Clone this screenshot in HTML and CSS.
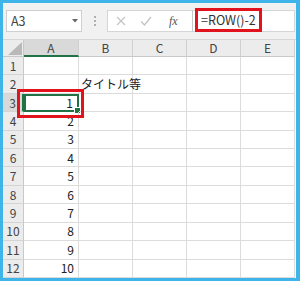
FILE: index.html
```html
<!DOCTYPE html>
<html lang="ja">
<head>
<meta charset="utf-8">
<link rel="stylesheet" href="styles.css">
</head>
<body>
<div class="frame">
  <div class="fbar">
    <div class="namebox"><span>A3</span><svg class="caret" width="6" height="4" viewBox="0 0 6 4"><path d="M0 0H6L3 3.5Z" fill="#666"/></svg></div>
    <div class="sep"><i></i><i></i><i></i></div>
    <div class="btns">
      <svg width="10" height="10" viewBox="0 0 10 10"><path d="M1 1L9 9M9 1L1 9" stroke="#c4c4c4" stroke-width="1.2" fill="none"/></svg>
      <svg width="12" height="10" viewBox="0 0 12 10"><path d="M1 5.5L4.5 9L11 1" stroke="#c4c4c4" stroke-width="1.3" fill="none"/></svg>
      <span class="fx">fx</span>
    </div>
    <div class="formula"><span class="hl">=ROW()-2</span></div>
  </div>
  <div class="sheet">
    <div class="corner"><svg width="14" height="13" viewBox="0 0 14 13"><path d="M14 0V13H0Z" fill="#b9b9b9"/></svg></div>
    <div class="ch sel">A</div><div class="ch">B</div><div class="ch">C</div><div class="ch">D</div><div class="ch last">E</div>

    <div class="rh">1</div><div class="c"></div><div class="c"></div><div class="c"></div><div class="c"></div><div class="c last"></div>
    <div class="rh">2</div><div class="c"></div><div class="c over">タイトル等</div><div class="c"></div><div class="c"></div><div class="c last"></div>
    <div class="rh rsel">3</div><div class="c num active">1<i class="handle"></i></div><div class="c"></div><div class="c"></div><div class="c"></div><div class="c last"></div>
    <div class="rh">4</div><div class="c num">2</div><div class="c"></div><div class="c"></div><div class="c"></div><div class="c last"></div>
    <div class="rh">5</div><div class="c num">3</div><div class="c"></div><div class="c"></div><div class="c"></div><div class="c last"></div>
    <div class="rh">6</div><div class="c num">4</div><div class="c"></div><div class="c"></div><div class="c"></div><div class="c last"></div>
    <div class="rh">7</div><div class="c num">5</div><div class="c"></div><div class="c"></div><div class="c"></div><div class="c last"></div>
    <div class="rh">8</div><div class="c num">6</div><div class="c"></div><div class="c"></div><div class="c"></div><div class="c last"></div>
    <div class="rh">9</div><div class="c num">7</div><div class="c"></div><div class="c"></div><div class="c"></div><div class="c last"></div>
    <div class="rh">10</div><div class="c num">8</div><div class="c"></div><div class="c"></div><div class="c"></div><div class="c last"></div>
    <div class="rh">11</div><div class="c num">9</div><div class="c"></div><div class="c"></div><div class="c"></div><div class="c last"></div>
    <div class="rh">12</div><div class="c num">10</div><div class="c"></div><div class="c"></div><div class="c"></div><div class="c last"></div>

    <div class="callout"></div>
  </div>
</div>
</body>
</html>
```

FILE: styles.css
```css
* { box-sizing: border-box; }
html, body { margin: 0; padding: 0; background: #fff; }
body {
  font-family: "Noto Sans CJK JP", "Noto Sans", sans-serif;
  color: #333;
  line-height: 1;
}
.frame {
  width: 300px;
  height: 281px;
  border-style: solid;
  border-color: #3fb4e8;
  border-width: 3px 4px 3px 3px;
  background: #fff;
  display: flex;
  flex-direction: column;
  overflow: hidden;
}
.fbar {
  height: 37px;
  flex: none;
  background: #f1f1f1;
  display: flex;
  padding: 7px 1px 7px 3px;
  border-bottom: 1px solid #d6d6d6;
}
.namebox {
  width: 76px;
  background: #fff;
  border: 1px solid #cfcfcf;
  display: flex;
  align-items: center;
  justify-content: space-between;
  padding: 0 3px 0 4px;
  font-size: 12.5px;
  color: #444;
}
.sep {
  width: 25px;
  display: flex;
  flex-direction: column;
  align-items: center;
  justify-content: center;
  gap: 2px;
}
.sep i {
  width: 2px;
  height: 2px;
  background: #b0b0b0;
  display: block;
}
.btns {
  width: 86px;
  background: #fff;
  border: 1px solid #d6d6d6;
  border-right: 1px solid #c8c8c8;
  display: flex;
  align-items: center;
  padding-left: 8px;
  gap: 14px;
}
.fx {
  font-family: "Liberation Serif", "DejaVu Serif", serif;
  font-style: italic;
  font-size: 12px;
  color: #555;
  margin-left: 3px;
}
.formula {
  flex: 1;
  background: #fff;
  border: 1px solid #d6d6d6;
  border-left: none;
  display: flex;
  align-items: center;
}
.hl {
  height: 24px;
  margin-left: 2px;
  margin-top: -2px;
  border: 3px solid #e1141e;
  font-size: 12.5px;
  color: #333;
  display: flex;
  align-items: center;
  padding: 0 3px 0 3px;
  white-space: nowrap;
}
.sheet {
  flex: 1;
  min-height: 0;
  position: relative;
  display: grid;
  grid-template-columns: 21px 55px 54px 54px 54px 54px;
  grid-template-rows: 17px repeat(12, minmax(0, 1fr));
}
.sheet > div { min-height: 0; }
.corner {
  background: #ececec;
  border-right: 1px solid #c8c8c8;
  border-bottom: 1px solid #c8c8c8;
  display: flex;
  align-items: flex-end;
  justify-content: flex-end;
  padding: 0 1px 1px 0;
}
.ch {
  background: #ececec;
  border-right: 1px solid #d0d0d0;
  border-bottom: 1px solid #c8c8c8;
  font-size: 12px;
  color: #444;
  display: flex;
  align-items: center;
  justify-content: center;
}
.ch.sel {
  background: #d9d9d9;
  border-bottom: 2px solid #217346;
  color: #444;
}
.rh {
  background: #ececec;
  border-right: 1px solid #c8c8c8;
  border-bottom: 1px solid #d4d4d4;
  font-size: 12px;
  color: #444;
  display: flex;
  align-items: center;
  justify-content: center;
}
.rh.rsel {
  background: #d9d9d9;
  border-right: 2px solid #217346;
}
.c {
  border-right: 1px solid #dcdcdc;
  border-bottom: 1px solid #dcdcdc;
  font-size: 12px;
  color: #222;
  display: flex;
  align-items: center;
  position: relative;
}
.num {
  justify-content: flex-end;
  padding-right: 4px;
}
.over {
  white-space: nowrap;
  overflow: visible;
  padding-left: 2px;
  z-index: 1;
}
.active {
  border: 2px solid #217346;
}
.handle {
  position: absolute;
  right: -4px;
  bottom: -4px;
  width: 5px;
  height: 5px;
  background: #217346;
  border: 1px solid #fff;
  box-sizing: content-box;
}
.callout {
  position: absolute;
  left: 14px;
  top: 49px;
  width: 67px;
  height: 29px;
  border: 3px solid #e1141e;
  pointer-events: none;
  z-index: 2;
}
```
